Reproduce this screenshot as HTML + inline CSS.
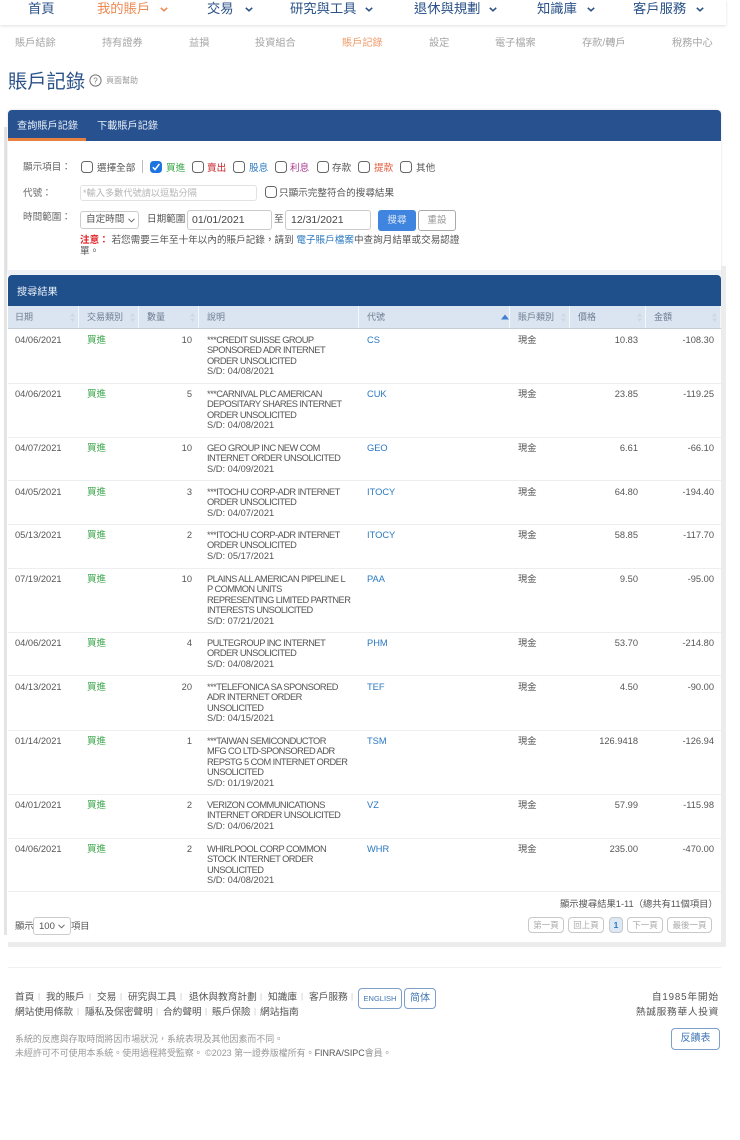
<!DOCTYPE html>
<html lang="zh-Hant"><head><meta charset="utf-8"><title>賬戶記錄</title>
<style>
*{box-sizing:border-box}
html,body{margin:0;padding:0;background:#fff}
body{width:740px;height:1140px;position:relative;overflow:hidden;font-family:"Liberation Sans","Noto Sans CJK TC",sans-serif;color:#555}
.a,.a *{white-space:nowrap}
.a{position:absolute}
.nav{font-size:13.3px;line-height:18px;color:#2a5288;top:0}
.chev{position:absolute;top:7px;width:8px;height:5px}
.sub{font-size:10.2px;line-height:14px;color:#a5a5a5;top:37px}
.cb{position:absolute;width:12px;height:12px;border:1px solid #666;border-radius:3.5px;background:#fff;top:161px}
.lb{font-size:9.6px;line-height:13px;top:162px}
.lab{font-size:9.6px;line-height:13px;color:#666}
.th{position:absolute;top:306px;height:23px;font-size:9px;line-height:23px;color:#6d7d92;padding-left:8px;border-right:1px solid #f3f6fa;background:#dbe5f1}
.th svg{position:absolute;right:3px;top:7px}
.c{position:absolute;font-size:9.3px;line-height:10.4px;color:#555;white-space:pre}
.d{letter-spacing:-.55px}
.d span{letter-spacing:0}
.g{color:#3aa54a;font-size:9.5px;margin-top:1px}
.l{color:#2a78c0}
.r{text-align:right}
.sep{position:absolute;left:8px;width:713px;height:1px;background:#eceef0}
.pg{position:absolute;top:917px;height:16px;border:1px solid #c8c8c8;border-radius:4px;font-size:8.5px;line-height:14px;color:#aaa;text-align:center;background:#fff}
.f{font-size:9.7px;line-height:13px;color:#555}
.fs{color:#c4c4c4;font-size:8px}
.fg{font-size:8.95px;line-height:13px;color:#999}
.btn{position:absolute;border:1px solid #7d9fc9;border-radius:4px;color:#3f76b5;text-align:center;background:#fff}
</style></head><body>

<div class="a" style="left:0;top:0;width:726px;height:25px;background:#fff;box-shadow:0 1px 3px rgba(0,0,0,.13)"></div>
<div class="a nav" style="left:28px">首頁</div>
<div class="a nav" style="left:97px;color:#ec8a52">我的賬戶</div>
<svg class="chev" style="left:160px" viewBox="0 0 8 5"><path d="M.8.8 4 3.8 7.2.8" fill="none" stroke="#ec8a52" stroke-width="1.6"/></svg>
<div class="a nav" style="left:207px">交易</div>
<svg class="chev" style="left:245px" viewBox="0 0 8 5"><path d="M.8.8 4 3.8 7.2.8" fill="none" stroke="#2a5288" stroke-width="1.6"/></svg>
<div class="a nav" style="left:290px">研究與工具</div>
<svg class="chev" style="left:365px" viewBox="0 0 8 5"><path d="M.8.8 4 3.8 7.2.8" fill="none" stroke="#2a5288" stroke-width="1.6"/></svg>
<div class="a nav" style="left:414px">退休與規劃</div>
<svg class="chev" style="left:489px" viewBox="0 0 8 5"><path d="M.8.8 4 3.8 7.2.8" fill="none" stroke="#2a5288" stroke-width="1.6"/></svg>
<div class="a nav" style="left:537px">知識庫</div>
<svg class="chev" style="left:587px" viewBox="0 0 8 5"><path d="M.8.8 4 3.8 7.2.8" fill="none" stroke="#2a5288" stroke-width="1.6"/></svg>
<div class="a nav" style="left:633px">客戶服務</div>
<svg class="chev" style="left:696px" viewBox="0 0 8 5"><path d="M.8.8 4 3.8 7.2.8" fill="none" stroke="#2a5288" stroke-width="1.6"/></svg>

<div class="a sub" style="left:15px">賬戶結餘</div>
<div class="a sub" style="left:102px">持有證券</div>
<div class="a sub" style="left:189px">益損</div>
<div class="a sub" style="left:255px">投資組合</div>
<div class="a sub" style="left:342px;color:#ef9a68">賬戶記錄</div>
<div class="a sub" style="left:429px">設定</div>
<div class="a sub" style="left:495px">電子檔案</div>
<div class="a sub" style="left:582px">存款/轉戶</div>
<div class="a sub" style="left:672px">稅務中心</div>

<div class="a" style="left:8px;top:70px;font-size:19.3px;line-height:26px;color:#2a5288">賬戶記錄</div>
<svg class="a" style="left:89px;top:74px" width="13" height="13" viewBox="0 0 13 13"><circle cx="6.5" cy="6.5" r="5.6" fill="none" stroke="#777"/><text x="6.5" y="9.3" font-size="8" text-anchor="middle" fill="#777" font-family="Liberation Sans">?</text></svg>
<div class="a" style="left:106px;top:75px;font-size:8px;line-height:11px;color:#999">頁面幫助</div>

<!-- query panel -->
<div class="a" style="left:4px;top:127px;width:3px;height:808px;background:#e4e4e4"></div>
<div class="a" style="left:8px;top:110px;width:713px;height:165px;background:#fff;border-radius:4px 4px 0 0;box-shadow:0 0 3px rgba(0,0,0,.12)"></div>
<div class="a" style="left:8px;top:110px;width:713px;height:31px;background:#27528f;border-radius:4px 4px 0 0"></div>
<div class="a" style="left:8px;top:138px;width:78px;height:3px;background:#e8803f"></div>
<div class="a" style="left:17px;top:119px;font-size:10.2px;line-height:14px;color:#e8eef6;top:121px;top:119px;margin-top:1px">查詢賬戶記錄</div>
<div class="a" style="left:97px;top:119px;font-size:10.2px;line-height:14px;color:#e8eef6;margin-top:1px">下載賬戶記錄</div>

<div class="a lab" style="left:23px;top:161px">顯示項目：</div>
<div class="cb" style="left:81px"></div><div class="a lb" style="left:97px;color:#555">選擇全部</div>
<div class="a" style="left:142px;top:160px;width:1px;height:13px;background:#bbb"></div>
<svg class="a" style="left:150px;top:161px" width="12" height="12" viewBox="0 0 12 12"><rect width="12" height="12" rx="3.5" fill="#1f74e0"/><path d="M2.8 6.2 5 8.6 9.4 3" fill="none" stroke="#fff" stroke-width="1.5"/></svg>
<div class="a lb" style="left:166px;color:#3aa54a">買進</div>
<div class="cb" style="left:192px"></div><div class="a lb" style="left:207px;color:#c9252b">賣出</div>
<div class="cb" style="left:233px"></div><div class="a lb" style="left:249px;color:#2a78c0">股息</div>
<div class="cb" style="left:275px"></div><div class="a lb" style="left:290px;color:#a83a8e">利息</div>
<div class="cb" style="left:317px"></div><div class="a lb" style="left:332px">存款</div>
<div class="cb" style="left:358px"></div><div class="a lb" style="left:374px;color:#e2583a">提款</div>
<div class="cb" style="left:400px"></div><div class="a lb" style="left:416px">其他</div>

<div class="a lab" style="left:23px;top:187px">代號：</div>
<div class="a" style="left:80px;top:185px;width:177px;height:16px;border:1px solid #e2e2e2;border-radius:3px;font-size:9.2px;line-height:14px;color:#b5b5b5;padding-left:2px">*輸入多數代號請以逗點分隔</div>
<div class="cb" style="left:265px;top:186px"></div><div class="a lb" style="left:279px;top:187px">只顯示完整符合的搜尋結果</div>

<div class="a lab" style="left:23px;top:211px">時間範圍：</div>
<div class="a" style="left:80px;top:211px;width:59px;height:18px;border:1px solid #ccc;border-radius:3px;font-size:9.6px;line-height:16px;padding-left:5px">自定時間</div>
<svg class="a" style="left:128px;top:218px" width="7" height="5" viewBox="0 0 7 5"><path d="M.5.8 3.5 3.8 6.5.8" fill="none" stroke="#666"/></svg>
<div class="a lb" style="left:147px;top:213px">日期範圍</div>
<div class="a" style="left:187px;top:210px;width:85px;height:20px;border:1px solid #ccc;border-radius:3px;font-size:10.5px;line-height:18px;padding-left:4px;color:#444">01/01/2021</div>
<div class="a lb" style="left:274px;top:213px">至</div>
<div class="a" style="left:285px;top:210px;width:86px;height:20px;border:1px solid #ccc;border-radius:3px;font-size:10.5px;line-height:18px;padding-left:5px;color:#444">12/31/2021</div>
<div class="a" style="left:378px;top:210px;width:38px;height:21px;background:#3f85df;border-radius:3px;font-size:9.6px;line-height:21px;color:#dfe9f6;text-align:center">搜尋</div>
<div class="a" style="left:418px;top:210px;width:38px;height:21px;border:1px solid #aaa;border-radius:3px;font-size:9.6px;line-height:20px;color:#999;text-align:center">重設</div>
<div class="a" style="left:80px;top:234px;font-size:9.6px;line-height:13px"><span style="color:#e01f26;font-weight:bold">注意：</span> 若您需要三年至十年以內的賬戶記錄，請到 <span style="color:#2a78c0">電子賬戶檔案</span>中查詢月結單或交易認證</div>
<div class="a" style="left:80px;top:245px;font-size:9.6px;line-height:13px">單。</div>

<!-- results panel -->
<div class="a" style="left:8px;top:270px;width:713px;height:5px;background:#eef1f5"></div>
<div class="a" style="left:721px;top:266px;width:5px;height:681px;background:#ececec"></div>
<div class="a" style="left:8px;top:942px;width:718px;height:5px;background:#ececec"></div>
<div class="a" style="left:8px;top:275px;width:713px;height:667px;background:#fff;border-radius:4px 4px 0 0"></div>
<div class="a" style="left:8px;top:275px;width:713px;height:31px;background:#20508c;border-radius:4px 4px 0 0"></div>
<div class="a" style="left:17px;top:286px;font-size:10.2px;line-height:14px;color:#e8eef6">搜尋結果</div>

<div class="th" style="left:8px;width:71px;padding-left:7px">日期<svg width="5" height="9" viewBox="0 0 5 9"><path d="M0 3.5 2.5 0 5 3.5zM0 5.5 2.5 9 5 5.5z" fill="#ccd7e4"/></svg></div>
<div class="th" style="left:79px;width:60px">交易類別<svg width="5" height="9" viewBox="0 0 5 9"><path d="M0 3.5 2.5 0 5 3.5zM0 5.5 2.5 9 5 5.5z" fill="#ccd7e4"/></svg></div>
<div class="th" style="left:139px;width:60px">數量<svg width="5" height="9" viewBox="0 0 5 9"><path d="M0 3.5 2.5 0 5 3.5zM0 5.5 2.5 9 5 5.5z" fill="#ccd7e4"/></svg></div>
<div class="th" style="left:199px;width:160px">說明</div>
<div class="th" style="left:359px;width:151px">代號</div>
<div class="th" style="left:510px;width:60px">賬戶類別<svg width="5" height="9" viewBox="0 0 5 9"><path d="M0 3.5 2.5 0 5 3.5zM0 5.5 2.5 9 5 5.5z" fill="#ccd7e4"/></svg></div>
<div class="th" style="left:570px;width:76px">價格<svg width="5" height="9" viewBox="0 0 5 9"><path d="M0 3.5 2.5 0 5 3.5zM0 5.5 2.5 9 5 5.5z" fill="#ccd7e4"/></svg></div>
<div class="th" style="left:646px;width:75px">金額<svg width="5" height="9" viewBox="0 0 5 9"><path d="M0 3.5 2.5 0 5 3.5zM0 5.5 2.5 9 5 5.5z" fill="#ccd7e4"/></svg></div>
<div class="a" style="left:8px;top:328px;width:713px;height:1px;background:#c4ccd6"></div>
<svg class="a" style="left:501px;top:314px" width="8" height="6" viewBox="0 0 8 6"><path d="M0 5.5 4 .5 8 5.5z" fill="#3f7fd0"/></svg>

<!-- row 1 -->
<div class="c" style="left:15px;top:335px">04/06/2021</div><div class="c g" style="left:87px;top:335px">買進</div><div class="c r" style="left:152px;width:40px;top:335px">10</div>
<div class="c d" style="left:207px;top:335px">***CREDIT SUISSE GROUP
SPONSORED ADR INTERNET
ORDER UNSOLICITED
<span>S/D: 04/08/2021</span></div><div class="c l" style="left:367px;top:335px">CS</div><div class="c" style="left:518px;top:335px">現金</div><div class="c r" style="left:588px;width:50px;top:335px">10.83</div><div class="c r" style="left:664px;width:50px;top:335px">-108.30</div>
<div class="sep" style="top:383px"></div>
<!-- row 2 -->
<div class="c" style="left:15px;top:389px">04/06/2021</div><div class="c g" style="left:87px;top:389px">買進</div><div class="c r" style="left:152px;width:40px;top:389px">5</div>
<div class="c d" style="left:207px;top:389px">***CARNIVAL PLC AMERICAN
DEPOSITARY SHARES INTERNET
ORDER UNSOLICITED
<span>S/D: 04/08/2021</span></div><div class="c l" style="left:367px;top:389px">CUK</div><div class="c" style="left:518px;top:389px">現金</div><div class="c r" style="left:588px;width:50px;top:389px">23.85</div><div class="c r" style="left:664px;width:50px;top:389px">-119.25</div>
<div class="sep" style="top:437px"></div>
<!-- row 3 -->
<div class="c" style="left:15px;top:443px">04/07/2021</div><div class="c g" style="left:87px;top:443px">買進</div><div class="c r" style="left:152px;width:40px;top:443px">10</div>
<div class="c d" style="left:207px;top:443px">GEO GROUP INC NEW COM
INTERNET ORDER UNSOLICITED
<span>S/D: 04/09/2021</span></div><div class="c l" style="left:367px;top:443px">GEO</div><div class="c" style="left:518px;top:443px">現金</div><div class="c r" style="left:588px;width:50px;top:443px">6.61</div><div class="c r" style="left:664px;width:50px;top:443px">-66.10</div>
<div class="sep" style="top:480px"></div>
<!-- row 4 -->
<div class="c" style="left:15px;top:487px">04/05/2021</div><div class="c g" style="left:87px;top:487px">買進</div><div class="c r" style="left:152px;width:40px;top:487px">3</div>
<div class="c d" style="left:207px;top:487px">***ITOCHU CORP-ADR INTERNET
ORDER UNSOLICITED
<span>S/D: 04/07/2021</span></div><div class="c l" style="left:367px;top:487px">ITOCY</div><div class="c" style="left:518px;top:487px">現金</div><div class="c r" style="left:588px;width:50px;top:487px">64.80</div><div class="c r" style="left:664px;width:50px;top:487px">-194.40</div>
<div class="sep" style="top:524px"></div>
<!-- row 5 -->
<div class="c" style="left:15px;top:530px">05/13/2021</div><div class="c g" style="left:87px;top:530px">買進</div><div class="c r" style="left:152px;width:40px;top:530px">2</div>
<div class="c d" style="left:207px;top:530px">***ITOCHU CORP-ADR INTERNET
ORDER UNSOLICITED
<span>S/D: 05/17/2021</span></div><div class="c l" style="left:367px;top:530px">ITOCY</div><div class="c" style="left:518px;top:530px">現金</div><div class="c r" style="left:588px;width:50px;top:530px">58.85</div><div class="c r" style="left:664px;width:50px;top:530px">-117.70</div>
<div class="sep" style="top:568px"></div>
<!-- row 6 -->
<div class="c" style="left:15px;top:574px">07/19/2021</div><div class="c g" style="left:87px;top:574px">買進</div><div class="c r" style="left:152px;width:40px;top:574px">10</div>
<div class="c d" style="left:207px;top:574px">PLAINS ALL AMERICAN PIPELINE L
P COMMON UNITS
REPRESENTING LIMITED PARTNER
INTERESTS UNSOLICITED
<span>S/D: 07/21/2021</span></div><div class="c l" style="left:367px;top:574px">PAA</div><div class="c" style="left:518px;top:574px">現金</div><div class="c r" style="left:588px;width:50px;top:574px">9.50</div><div class="c r" style="left:664px;width:50px;top:574px">-95.00</div>
<div class="sep" style="top:632px"></div>
<!-- row 7 -->
<div class="c" style="left:15px;top:638px">04/06/2021</div><div class="c g" style="left:87px;top:638px">買進</div><div class="c r" style="left:152px;width:40px;top:638px">4</div>
<div class="c d" style="left:207px;top:638px">PULTEGROUP INC INTERNET
ORDER UNSOLICITED
<span>S/D: 04/08/2021</span></div><div class="c l" style="left:367px;top:638px">PHM</div><div class="c" style="left:518px;top:638px">現金</div><div class="c r" style="left:588px;width:50px;top:638px">53.70</div><div class="c r" style="left:664px;width:50px;top:638px">-214.80</div>
<div class="sep" style="top:675px"></div>
<!-- row 8 -->
<div class="c" style="left:15px;top:682px">04/13/2021</div><div class="c g" style="left:87px;top:682px">買進</div><div class="c r" style="left:152px;width:40px;top:682px">20</div>
<div class="c d" style="left:207px;top:682px">***TELEFONICA SA SPONSORED
ADR INTERNET ORDER
UNSOLICITED
<span>S/D: 04/15/2021</span></div><div class="c l" style="left:367px;top:682px">TEF</div><div class="c" style="left:518px;top:682px">現金</div><div class="c r" style="left:588px;width:50px;top:682px">4.50</div><div class="c r" style="left:664px;width:50px;top:682px">-90.00</div>
<div class="sep" style="top:730px"></div>
<!-- row 9 -->
<div class="c" style="left:15px;top:736px">01/14/2021</div><div class="c g" style="left:87px;top:736px">買進</div><div class="c r" style="left:152px;width:40px;top:736px">1</div>
<div class="c d" style="left:207px;top:736px">***TAIWAN SEMICONDUCTOR
MFG CO LTD-SPONSORED ADR
REPSTG 5 COM INTERNET ORDER
UNSOLICITED
<span>S/D: 01/19/2021</span></div><div class="c l" style="left:367px;top:736px">TSM</div><div class="c" style="left:518px;top:736px">現金</div><div class="c r" style="left:588px;width:50px;top:736px">126.9418</div><div class="c r" style="left:664px;width:50px;top:736px">-126.94</div>
<div class="sep" style="top:794px"></div>
<!-- row 10 -->
<div class="c" style="left:15px;top:800px">04/01/2021</div><div class="c g" style="left:87px;top:800px">買進</div><div class="c r" style="left:152px;width:40px;top:800px">2</div>
<div class="c d" style="left:207px;top:800px">VERIZON COMMUNICATIONS
INTERNET ORDER UNSOLICITED
<span>S/D: 04/06/2021</span></div><div class="c l" style="left:367px;top:800px">VZ</div><div class="c" style="left:518px;top:800px">現金</div><div class="c r" style="left:588px;width:50px;top:800px">57.99</div><div class="c r" style="left:664px;width:50px;top:800px">-115.98</div>
<div class="sep" style="top:838px"></div>
<!-- row 11 -->
<div class="c" style="left:15px;top:844px">04/06/2021</div><div class="c g" style="left:87px;top:844px">買進</div><div class="c r" style="left:152px;width:40px;top:844px">2</div>
<div class="c d" style="left:207px;top:844px">WHIRLPOOL CORP COMMON
STOCK INTERNET ORDER
UNSOLICITED
<span>S/D: 04/08/2021</span></div><div class="c l" style="left:367px;top:844px">WHR</div><div class="c" style="left:518px;top:844px">現金</div><div class="c r" style="left:588px;width:50px;top:844px">235.00</div><div class="c r" style="left:664px;width:50px;top:844px">-470.00</div>
<div class="sep" style="top:891px"></div>

<div class="a" style="left:560px;top:898px;font-size:9.3px;line-height:12px">顯示搜尋結果1-11（總共有11個項目）</div>
<div class="pg" style="left:528px;width:36px">第一頁</div>
<div class="pg" style="left:568px;width:36px">回上頁</div>
<div class="pg" style="left:609px;width:14px;background:#dce8f5;color:#2a78c0;font-weight:bold">1</div>
<div class="pg" style="left:627px;width:36px">下一頁</div>
<div class="pg" style="left:667px;width:45px">最後一頁</div>

<div class="a" style="left:15px;top:920px;font-size:9.3px;line-height:13px">顯示</div>
<div class="a" style="left:33px;top:917px;width:38px;height:18px;border:1px solid #ccc;border-radius:3px;font-size:9.5px;line-height:17px;padding-left:5px">100</div>
<svg class="a" style="left:58px;top:924px" width="7" height="5" viewBox="0 0 7 5"><path d="M.5.8 3.5 3.8 6.5.8" fill="none" stroke="#666"/></svg>
<div class="a" style="left:71px;top:920px;font-size:9.3px;line-height:13px">項目</div>

<!-- footer -->
<div class="a" style="left:8px;top:967px;width:713px;height:1px;background:#f0f0f0"></div>
<div class="a f" style="left:15px;top:991px">首頁</div><div class="a fs" style="left:38px;top:992px">|</div>
<div class="a f" style="left:46px;top:991px">我的賬戶</div><div class="a fs" style="left:89px;top:992px">|</div>
<div class="a f" style="left:97px;top:991px">交易</div><div class="a fs" style="left:120px;top:992px">|</div>
<div class="a f" style="left:128px;top:991px">研究與工具</div><div class="a fs" style="left:180px;top:992px">|</div>
<div class="a f" style="left:189px;top:991px">退休與教育計劃</div><div class="a fs" style="left:260px;top:992px">|</div>
<div class="a f" style="left:268px;top:991px">知識庫</div><div class="a fs" style="left:301px;top:992px">|</div>
<div class="a f" style="left:309px;top:991px">客戶服務</div><div class="a fs" style="left:351px;top:992px">|</div>
<div class="a f" style="left:15px;top:1006px">網站使用條款</div><div class="a fs" style="left:77px;top:1007px">|</div>
<div class="a f" style="left:85px;top:1006px">隱私及保密聲明</div><div class="a fs" style="left:156px;top:1007px">|</div>
<div class="a f" style="left:163px;top:1006px">合約聲明</div><div class="a fs" style="left:205px;top:1007px">|</div>
<div class="a f" style="left:212px;top:1006px">賬戶保險</div><div class="a fs" style="left:254px;top:1007px">|</div>
<div class="a f" style="left:260px;top:1006px">網站指南</div>
<div class="btn" style="left:358px;top:988px;width:44px;height:21px;font-size:7.5px;line-height:20px">ENGLISH</div>
<div class="btn" style="left:404px;top:988px;width:32px;height:21px;font-size:10px;line-height:19px">简体</div>
<div class="a fg" style="left:15px;top:1033px">系統的反應與存取時間將因市場狀況，系統表現及其他因素而不同。</div>
<div class="a fg" style="left:15px;top:1047px">未經許可不可使用本系統。使用過程將受監察。 ©2023 第一證券版權所有。<span style="color:#555">FINRA/SIPC</span>會員。</div>
<div class="a f" style="right:21px;top:991px;letter-spacing:.85px">自1985年開始</div>
<div class="a f" style="right:21px;top:1006px;letter-spacing:.7px">熱誠服務華人投資</div>
<div class="btn" style="left:671px;top:1028px;width:49px;height:22px;font-size:10px;line-height:20px">反饋表</div>
</body></html>
